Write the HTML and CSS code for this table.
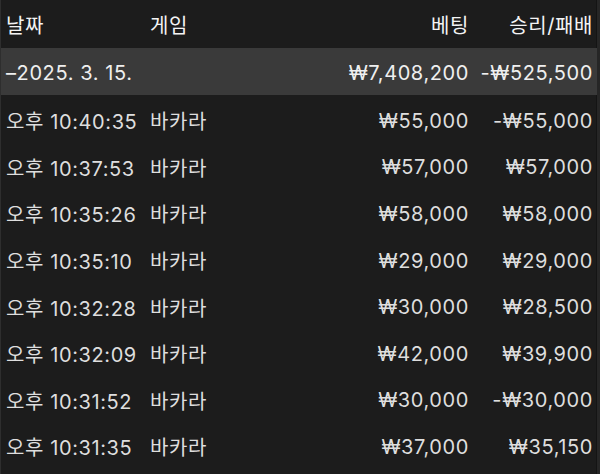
FILE: index.html
```html
<html>
	<head>
		<title>베팅 내역</title>
		<link rel="stylesheet" href="styles.css">
	</head>
	<body>
		<div class="frame">
			<div class="row head">
				<div>날짜</div>
				<div>게임</div>
				<div class="num">베팅</div>
				<div class="num">승리/패배</div>
			</div>
			<div class="row group">
				<div class="wide">–2025. 3. 15.</div>
				<div class="num">₩7,408,200</div>
				<div class="num">-₩525,500</div>
			</div>
			<div class="row">
				<div>오후 10:40:35</div>
				<div>바카라</div>
				<div class="num">₩55,000</div>
				<div class="num">-₩55,000</div>
			</div>
			<div class="row">
				<div>오후 10:37:53</div>
				<div>바카라</div>
				<div class="num">₩57,000</div>
				<div class="num">₩57,000</div>
			</div>
			<div class="row">
				<div>오후 10:35:26</div>
				<div>바카라</div>
				<div class="num">₩58,000</div>
				<div class="num">₩58,000</div>
			</div>
			<div class="row">
				<div>오후 10:35:10</div>
				<div>바카라</div>
				<div class="num">₩29,000</div>
				<div class="num">₩29,000</div>
			</div>
			<div class="row">
				<div>오후 10:32:28</div>
				<div>바카라</div>
				<div class="num">₩30,000</div>
				<div class="num">₩28,500</div>
			</div>
			<div class="row">
				<div>오후 10:32:09</div>
				<div>바카라</div>
				<div class="num">₩42,000</div>
				<div class="num">₩39,900</div>
			</div>
			<div class="row">
				<div>오후 10:31:52</div>
				<div>바카라</div>
				<div class="num">₩30,000</div>
				<div class="num">-₩30,000</div>
			</div>
			<div class="row">
				<div>오후 10:31:35</div>
				<div>바카라</div>
				<div class="num">₩37,000</div>
				<div class="num">₩35,150</div>
			</div>
		</div>
	</body>
</html>
```

FILE: styles.css
```css
* {
	box-sizing: border-box;
}

body {
	margin: 0;
	background: #1c1c1c;
	font-family: "Inter", "Noto Sans CJK KR", sans-serif;
	font-size: 20px;
	letter-spacing: 0.6px;
	color: #dedede;
	overflow: hidden;
}

.frame {
	height: 474px;
	border-left: 1px solid #2e2e2e;
	border-right: 3px solid #262626;
	box-shadow: inset -1px 0 0 #141414;
}

.row {
	display: grid;
	grid-template-columns: 144px 1fr 140px 124px;
	align-items: center;
	height: 46.6px;
	padding: 5px 4px 0 5px;
}

.head {
	height: 48px;
	padding-top: 0;
	color: #f4f4f4;
}

.group {
	height: 47px;
	padding-top: 3px;
	background: #3a3a3a;
	color: #efefef;
}

.wide {
	grid-column: 1 / 3;
}

.num {
	text-align: right;
}
```
